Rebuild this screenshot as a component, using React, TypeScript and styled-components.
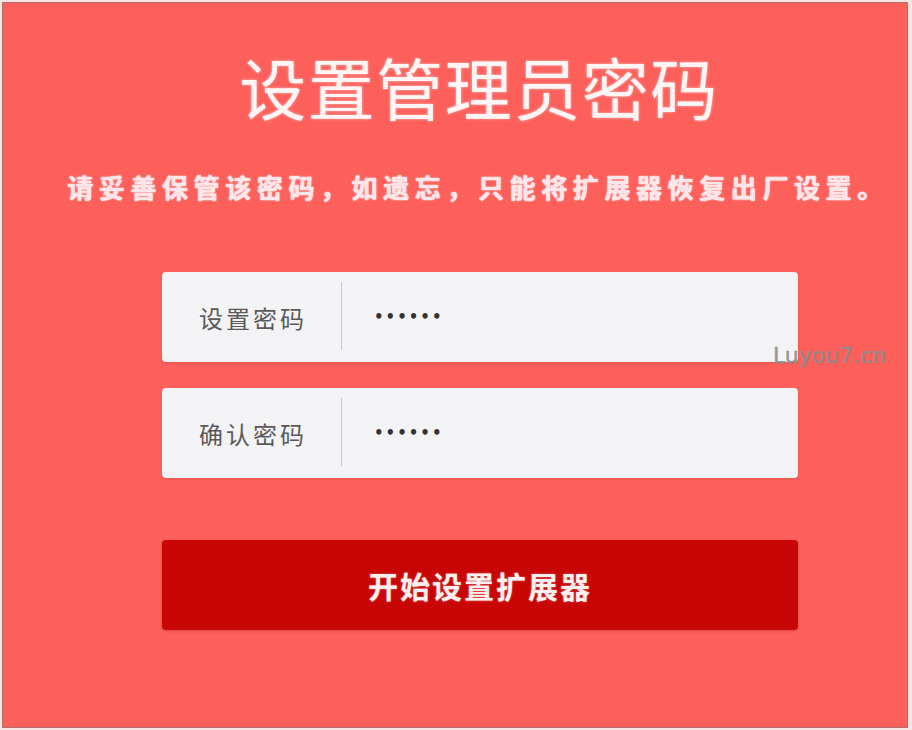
import React from 'react';
import styled, { createGlobalStyle } from 'styled-components';

const GlobalStyle = createGlobalStyle`
  html, body {
    margin: 0;
    padding: 0;
    background: #f7e4e4;
  }
  body {
    font-family: "Noto Sans CJK SC", "Noto Sans", sans-serif;
  }
`;

function App() {
  return (
    <>
      <GlobalStyle />
      <Frame>
        <Panel>
          <Content>
            <Title>设置管理员密码</Title>
            <Hint>请妥善保管该密码，如遗忘，只能将扩展器恢复出厂设置。</Hint>
            <Form>
              <Field>
                <FieldLabel>设置密码</FieldLabel>
                <Divider />
                <Dots>••••••</Dots>
              </Field>
              <Field>
                <FieldLabel>确认密码</FieldLabel>
                <Divider />
                <Dots>••••••</Dots>
              </Field>
              <SubmitButton type="button">开始设置扩展器</SubmitButton>
            </Form>
          </Content>
          <Watermark>Luyou7.cn</Watermark>
        </Panel>
      </Frame>
    </>
  );
}

const Frame = styled.div`
  width: 912px;
  height: 730px;
  box-sizing: border-box;
  padding: 2px 4px 2px 2px;
`;

const Panel = styled.div`
  position: relative;
  height: 100%;
  box-sizing: border-box;
  border: 1px solid #b07070;
  background-color: #fd5f5a;
  overflow: hidden;
`;

const Content = styled.div`
  display: flex;
  flex-direction: column;
  align-items: center;
  padding-left: 50px;
  padding-top: 43px;
`;

const Title = styled.h1`
  margin: 0 0 0 -2px;
  font: 400 67px "Noto Sans CJK SC", sans-serif;
  line-height: 80px;
  color: #fff5f5;
  letter-spacing: 1.5px;
  text-shadow: 0 0 3px rgba(255, 255, 255, 0.6);
`;

const Hint = styled.p`
  margin: 46px 0 0 -4px;
  font: 700 26px "Noto Sans CJK SC", sans-serif;
  line-height: 30px;
  color: #fde6ea;
  letter-spacing: 5.6px;
  white-space: nowrap;
  text-shadow: 0 0 2px rgba(255, 255, 255, 0.8), 0 0 1px #fff;
`;

const Form = styled.div`
  display: flex;
  flex-direction: column;
  width: 636px;
  margin-top: 70px;
  gap: 26px;
`;

const Field = styled.div`
  display: flex;
  align-items: center;
  height: 90px;
  background-color: #f3f3f6;
  border-radius: 4px;
  box-shadow: 0 1px 2px rgba(120, 0, 0, 0.15);
`;

const FieldLabel = styled.span`
  width: 179px;
  text-align: center;
  font: 400 24px "Noto Sans CJK SC", sans-serif;
  letter-spacing: 3px;
  text-indent: 3px;
  color: #5a5a5a;
`;

const Divider = styled.div`
  align-self: stretch;
  width: 1px;
  margin: 10px 0 12px;
  background-color: #c8c8cc;
`;

const Dots = styled.span`
  margin-left: 32px;
  font: 700 15px "DejaVu Sans", sans-serif;
  letter-spacing: 2px;
  color: #333;
`;

const SubmitButton = styled.button`
  margin-top: 36px;
  height: 90px;
  border: none;
  border-radius: 4px;
  background-color: #c80605;
  color: #fff0f0;
  font: 700 30px "Noto Sans CJK SC", sans-serif;
  letter-spacing: 2px;
  box-shadow: 0 1px 3px rgba(120, 0, 0, 0.25);
  text-shadow: 0 0 2px rgba(255, 255, 255, 0.5);
`;

const Watermark = styled.div`
  position: absolute;
  left: 770px;
  top: 340px;
  font: 400 22px "DejaVu Sans", sans-serif;
  -webkit-text-stroke: 0.5px #8d8d8d;
  color: #8d8d8d;
  opacity: 0.9;
`;

export default App;
